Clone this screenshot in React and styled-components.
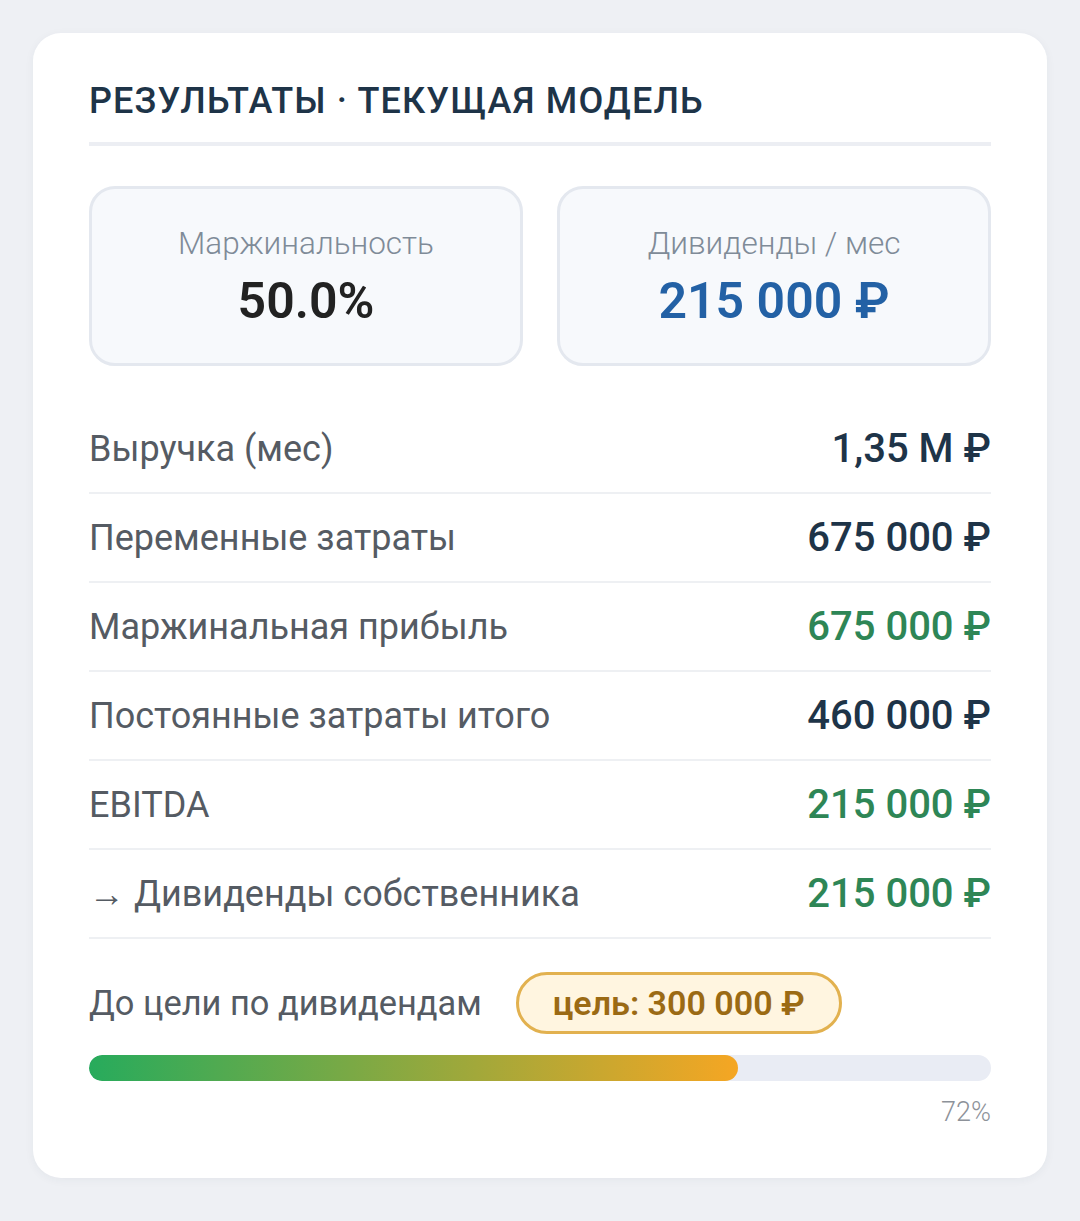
import React from 'react';
import styled, { createGlobalStyle } from 'styled-components';

const GlobalStyle = createGlobalStyle`
    body {
        margin: 0;
        background: #eef0f4;
        font-family: Roboto, "Noto Sans", sans-serif;
    }
`;

const Page = styled.div`
    padding: 33px;
`;

const Card = styled.div`
    width: 1014px;
    box-sizing: border-box;
    background: #fff;
    border-radius: 28px;
    padding: 47px 56px 50px;
    box-shadow: 0 2px 10px rgba(30, 52, 72, 0.05);
`;

const Title = styled.h2`
    margin: 0;
    font-size: 36px;
    font-weight: 500;
    letter-spacing: 1.15px;
    color: #1e3448;
    padding-bottom: 20px;
    border-bottom: 4px solid #eceef3;
`;

const Stats = styled.div`
    display: grid;
    grid-template-columns: 1fr 1fr;
    gap: 34px;
    margin-top: 40px;
`;

const StatBox = styled.div`
    height: 180px;
    box-sizing: border-box;
    border: 3px solid #e4e8ef;
    border-radius: 26px;
    background: #f7f9fc;
    display: flex;
    flex-direction: column;
    align-items: center;
    justify-content: center;
    gap: 10px;
    padding-top: 2px;
`;

const StatLabel = styled.div`
    font-size: 31.5px;
    font-weight: 300;
    color: #7f8b98;
`;

const StatValue = styled.div`
    font-size: 50px;
    font-weight: 600;
    color: ${(p) => p.$color};
`;

const Rows = styled.div`
    margin-top: 39px;
`;

const Row = styled.div`
    display: flex;
    justify-content: space-between;
    align-items: center;
    height: 87px;
    border-bottom: 2px solid #eef0f3;
`;

const Label = styled.span`
    font-size: ${(p) => p.$size || 36}px;
    font-weight: 400;
    color: #555b63;
`;

const Value = styled.span`
    font-size: 40px;
    font-weight: 500;
    color: ${(p) => p.$color};
`;

const GoalRow = styled.div`
    display: flex;
    align-items: center;
    gap: 34px;
    margin-top: 33px;
`;

const Badge = styled.span`
    display: inline-flex;
    align-items: center;
    height: 62px;
    box-sizing: border-box;
    padding: 0 34px;
    border: 3px solid #e2b14f;
    border-radius: 31px;
    background: #fff5e0;
    color: #9b6a14;
    font-size: 34px;
    font-weight: 600;
`;

const Track = styled.div`
    margin-top: 21px;
    height: 26px;
    border-radius: 13px;
    background: #e9ecf4;
    overflow: hidden;
`;

const Fill = styled.div`
    height: 100%;
    border-radius: 13px;
    background: linear-gradient(90deg, #27ab5c, #f5a623);
`;

const Percent = styled.div`
    text-align: right;
    margin-top: 15px;
    font-size: 27px;
    font-weight: 300;
    color: #8d9299;
`;

const navy = '#1e3448';
const green = '#2e8656';

const rows = [
    { label: 'Выручка (мес)', value: '1,35 М ₽', color: navy },
    { label: 'Переменные затраты', value: '675 000 ₽', color: navy },
    { label: 'Маржинальная прибыль', value: '675 000 ₽', color: green },
    { label: 'Постоянные затраты итого', value: '460 000 ₽', color: navy },
    { label: 'EBITDA', value: '215 000 ₽', color: green },
    { label: '→ Дивиденды собственника', value: '215 000 ₽', color: green },
];

const App = () => {
    const progress = 72;
    return (
        <Page>
            <GlobalStyle />
            <Card>
                <Title>РЕЗУЛЬТАТЫ · ТЕКУЩАЯ МОДЕЛЬ</Title>

                <Stats>
                    <StatBox>
                        <StatLabel>Маржинальность</StatLabel>
                        <StatValue $color="#222">50.0%</StatValue>
                    </StatBox>
                    <StatBox>
                        <StatLabel>Дивиденды / мес</StatLabel>
                        <StatValue $color="#2361a5">215 000 ₽</StatValue>
                    </StatBox>
                </Stats>

                <Rows>
                    {rows.map((r) => (
                        <Row key={r.label}>
                            <Label>{r.label}</Label>
                            <Value $color={r.color}>{r.value}</Value>
                        </Row>
                    ))}
                </Rows>

                <GoalRow>
                    <Label $size={34.4}>До цели по дивидендам</Label>
                    <Badge>цель: 300 000 ₽</Badge>
                </GoalRow>
                <Track>
                    <Fill style={{ width: `${progress}%` }} />
                </Track>
                <Percent>{progress}%</Percent>
            </Card>
        </Page>
    );
};

export default App;
